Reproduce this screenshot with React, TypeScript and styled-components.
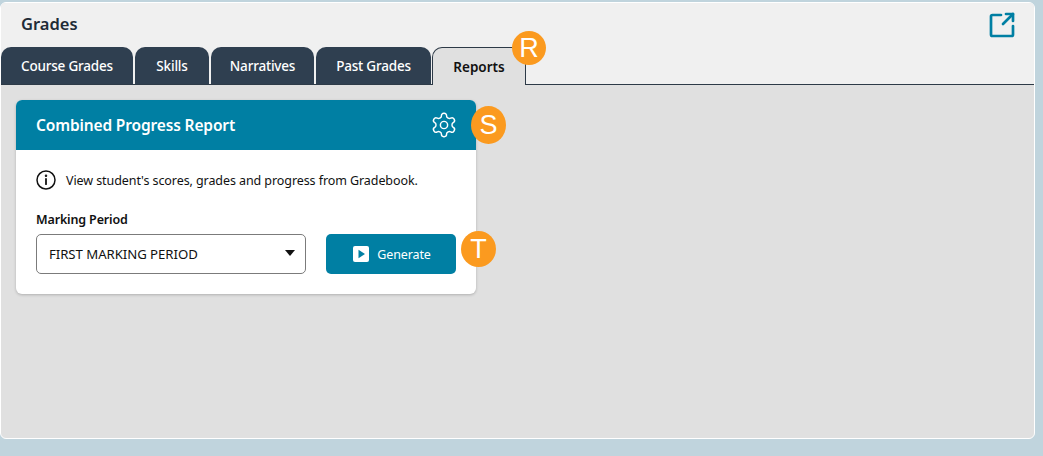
import React from 'react'
import styled, { createGlobalStyle } from 'styled-components'

const Global = createGlobalStyle`
  html, body {
    margin: 0;
    height: 100%;
    background: #c0d4dd;
    font-family: 'Noto Sans', 'Open Sans', sans-serif;
  }
`

const Page = styled.div`
  width: 1043px;
  height: 456px;
  padding: 2px 8px 17px 0;
  box-sizing: border-box;
  overflow: hidden;
`

const Panel = styled.div`
  height: 100%;
  box-sizing: border-box;
  display: flex;
  flex-direction: column;
  background: #e0e0e0;
  border: 1px solid #fff;
  border-radius: 6px;
  overflow: hidden;
`

const Header = styled.div`
  height: 44px;
  box-sizing: border-box;
  background: #f0f0f0;
  padding: 0 19px 2px 20px;
  display: flex;
  align-items: center;
  justify-content: space-between;
  flex: none;
`

const Title = styled.h1`
  margin: 0;
  font-size: 16.5px;
  font-weight: 600;
  line-height: 22px;
  color: #212b36;
`

const ExternalSvg = styled.svg`
  margin-top: 2px;
`

const TabBar = styled.div`
  height: 38px;
  flex: none;
  background: #f0f0f0;
  display: flex;
  align-items: flex-end;
  gap: 2px;
  position: relative;
  box-sizing: border-box;
  &::after {
    content: '';
    position: absolute;
    left: 0;
    right: 0;
    bottom: 0;
    height: 1px;
    background: #2d3a47;
  }
`

const Tab = styled.div<{ $active?: boolean; $width: number }>`
  width: ${p => p.$width}px;
  height: 38px;
  box-sizing: border-box;
  display: flex;
  align-items: center;
  justify-content: center;
  border-radius: 10px 10px 0 0;
  font-size: 13.5px;
  font-weight: ${p => (p.$active ? 600 : 500)};
  letter-spacing: ${p => (p.$active ? 0 : -0.2)}px;
  position: relative;
  z-index: ${p => (p.$active ? 1 : 0)};
  background: ${p => (p.$active ? '#e0e0e0' : '#2f3f50')};
  color: ${p => (p.$active ? '#111' : '#fff')};
  border: ${p => (p.$active ? '1px solid #2d3a47' : 'none')};
  border-bottom: none;
  margin-left: ${p => (p.$active ? -1 : 0)}px;
`

const Badge = styled.span<{ $top: number; $left: number; $w: number; $h: number }>`
  position: absolute;
  top: ${p => p.$top}px;
  left: ${p => p.$left}px;
  width: ${p => p.$w}px;
  height: ${p => p.$h}px;
  border-radius: 50%;
  background: #fb9a1f;
  color: #fff;
  font-family: 'Liberation Sans', Arial, sans-serif;
  font-size: 27px;
  line-height: ${p => p.$h}px;
  text-align: center;
  z-index: 3;
`

const Content = styled.div`
  flex: 1;
  padding: 15px;
`

const Card = styled.section`
  width: 460px;
  height: 194px;
  background: #fff;
  border-radius: 6px;
  box-shadow: 0 1px 3px rgba(0, 0, 0, 0.22);
  position: relative;
`

const CardHeader = styled.div`
  height: 50px;
  background: #007fa3;
  border-radius: 6px 6px 0 0;
  color: #fff;
  display: flex;
  align-items: center;
  justify-content: space-between;
  padding: 0 18px 0 20px;
`

const CardTitle = styled.h2`
  margin: 0;
  font-size: 15.5px;
  font-weight: 600;
  letter-spacing: -0.14px;
`

const CardBody = styled.div`
  padding: 20px 20px 0;
`

const Info = styled.div`
  display: flex;
  align-items: center;
  gap: 10px;
  height: 20px;
  font-size: 12.5px;
  letter-spacing: -0.08px;
  color: #111;
`

const Label = styled.div`
  margin-top: 21px;
  height: 18px;
  font-size: 12.5px;
  line-height: 18px;
  font-weight: 600;
  letter-spacing: -0.15px;
  color: #111;
`

const Row = styled.div`
  display: flex;
  gap: 20px;
  margin-top: 5px;
`

const Select = styled.div`
  width: 270px;
  height: 40px;
  box-sizing: border-box;
  border: 1px solid #7b7b7b;
  border-radius: 5px;
  padding: 0 12px;
  display: flex;
  align-items: center;
  justify-content: space-between;
  font-size: 13.2px;
  letter-spacing: -0.05px;
  color: #111;
`

const Caret = styled.span`
  width: 0;
  height: 0;
  border-left: 5px solid transparent;
  border-right: 5px solid transparent;
  border-top: 6px solid #111;
  margin: 0 -2px 3px 0;
`

const Button = styled.button`
  width: 130px;
  height: 40px;
  border: none;
  border-radius: 5px;
  background: #007fa3;
  color: #fff;
  font: inherit;
  font-size: 12.5px;
  letter-spacing: -0.1px;
  display: flex;
  align-items: center;
  justify-content: center;
  gap: 8px;
  padding: 0 0 0 2px;
`

const ExternalIcon = () => (
  <ExternalSvg width="26" height="26" viewBox="0 0 26 26" fill="none" stroke="#007fa3" strokeWidth="2.7" strokeLinecap="round" strokeLinejoin="round">
    <path d="M12 3H3.5A1.5 1.5 0 0 0 2 4.5v18A1.5 1.5 0 0 0 3.5 24h19a1.5 1.5 0 0 0 1.5-1.5V14" />
    <path d="M14 12L24 2" />
    <path d="M17 2h7v7" />
  </ExternalSvg>
)

const GearIcon = () => (
  <svg width="28" height="28" viewBox="0 0 24 24" fill="none" stroke="#fff" strokeWidth="1.25" strokeLinecap="round" strokeLinejoin="round">
    <path d="M12.22 2h-.44a2 2 0 0 0-2 2v.18a2 2 0 0 1-1 1.73l-.43.25a2 2 0 0 1-2 0l-.15-.08a2 2 0 0 0-2.73.73l-.22.38a2 2 0 0 0 .73 2.73l.15.1a2 2 0 0 1 1 1.72v.51a2 2 0 0 1-1 1.74l-.15.09a2 2 0 0 0-.73 2.73l.22.38a2 2 0 0 0 2.73.73l.15-.08a2 2 0 0 1 2 0l.43.25a2 2 0 0 1 1 1.73V20a2 2 0 0 0 2 2h.44a2 2 0 0 0 2-2v-.18a2 2 0 0 1 1-1.73l.43-.25a2 2 0 0 1 2 0l.15.08a2 2 0 0 0 2.73-.73l.22-.39a2 2 0 0 0-.73-2.73l-.15-.08a2 2 0 0 1-1-1.74v-.5a2 2 0 0 1 1-1.74l.15-.09a2 2 0 0 0 .73-2.73l-.22-.38a2 2 0 0 0-2.73-.73l-.15.08a2 2 0 0 1-2 0l-.43-.25a2 2 0 0 1-1-1.73V4a2 2 0 0 0-2-2z" />
    <circle cx="12" cy="12" r="3.1" />
  </svg>
)

const InfoIcon = () => (
  <svg width="20" height="20" viewBox="0 0 20 20" fill="none" stroke="#111" strokeWidth="1.5" strokeLinecap="round">
    <circle cx="10" cy="10" r="9" />
    <path d="M10 9v5.2" strokeWidth="1.8" />
    <circle cx="10" cy="5.8" r="0.5" fill="#111" />
  </svg>
)

const PlayIcon = () => (
  <svg width="16" height="16" viewBox="0 0 16 16">
    <rect width="16" height="16" rx="2" fill="#fff" />
    <path d="M5.5 3.8L12 8l-6.5 4.2z" fill="#007fa3" />
  </svg>
)

const tabs = [
  { label: 'Course Grades', width: 132 },
  { label: 'Skills', width: 74 },
  { label: 'Narratives', width: 103 },
  { label: 'Past Grades', width: 115 },
]

export default function App() {
  return (
    <>
      <Global />
      <Page>
        <Panel>
          <Header>
            <Title>Grades</Title>
            <ExternalIcon />
          </Header>
          <TabBar>
            {tabs.map(t => (
              <Tab key={t.label} $width={t.width}>{t.label}</Tab>
            ))}
            <Tab $active $width={94}>Reports</Tab>
            <Badge $top={-16} $left={511} $w={34} $h={34}>R</Badge>
          </TabBar>
          <Content>
            <Card>
              <CardHeader>
                <CardTitle>Combined Progress Report</CardTitle>
                <GearIcon />
                <Badge $top={6} $left={455} $w={35} $h={38}>S</Badge>
              </CardHeader>
              <CardBody>
                <Info>
                  <InfoIcon />
                  View student's scores, grades and progress from Gradebook.
                </Info>
                <Label>Marking Period</Label>
                <Row>
                  <Select>
                    FIRST MARKING PERIOD
                    <Caret />
                  </Select>
                  <Button>
                    <PlayIcon />
                    Generate
                  </Button>
                </Row>
              </CardBody>
              <Badge $top={131} $left={445} $w={35} $h={36}>T</Badge>
            </Card>
          </Content>
        </Panel>
      </Page>
    </>
  )
}
